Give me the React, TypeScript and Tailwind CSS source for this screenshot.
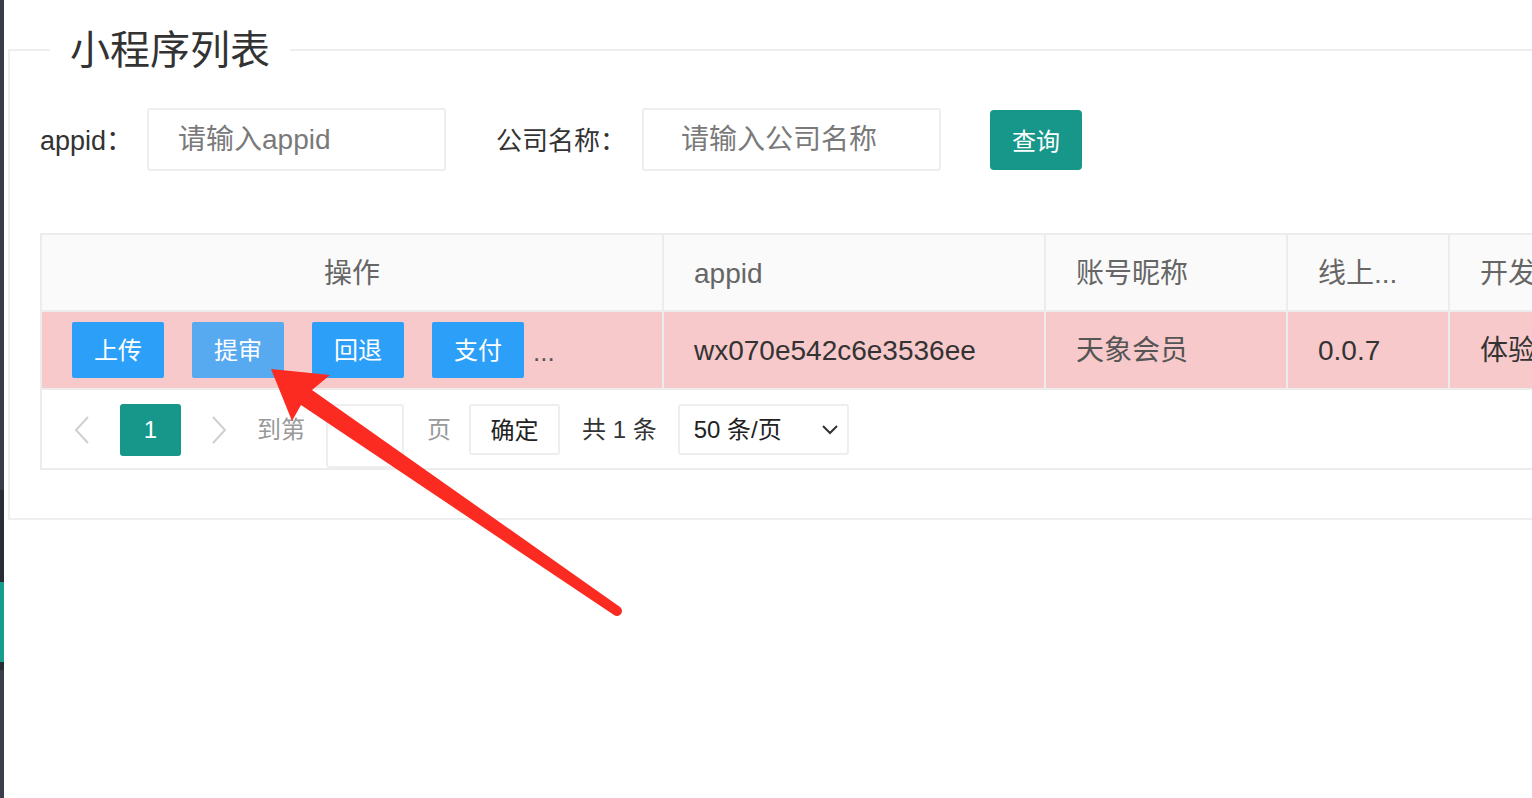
import React from "react";

const FONT = '"Liberation Sans", "Noto Sans CJK SC", sans-serif';

function Chevron({ dir }: { dir: "left" | "right" }) {
  return (
    <svg width="16" height="30" viewBox="0 0 16 30" aria-hidden>
      <polyline
        points={dir === "left" ? "14,2 2,15 14,28" : "2,2 14,15 2,28"}
        fill="none"
        stroke="#cfcfcf"
        strokeWidth="2"
      />
    </svg>
  );
}

function ActionButton({ label, hover }: { label: string; hover?: boolean }) {
  return (
    <button
      className={`flex h-[56px] w-[92px] items-center justify-center rounded-[2px] pt-[2px] text-[24px] text-white ${
        hover ? "bg-[#57a9f0]" : "bg-[#2c9ff8]"
      }`}
    >
      {label}
    </button>
  );
}

export default function App() {
  return (
    <div
      className="relative flex h-[798px] w-full overflow-hidden bg-white"
      style={{ fontFamily: FONT }}
    >
      {/* sidebar edge */}
      <div className="flex w-[4px] shrink-0 flex-col">
        <div className="h-[490px] bg-[#393c48]" />
        <div className="h-[92px] bg-[#2a2c33]" />
        <div className="h-[80px] bg-[#189c8c]" />
        <div className="h-[8px] bg-[#2a2c33]" />
        <div className="flex-1 bg-[#3a3d4a]" />
      </div>

      <div className="min-w-0 flex-1 pl-[4px] pt-[30px]">
        <fieldset className="w-[1600px] border-2 border-[#eeeeee] px-[30px] pb-[48px]">
          <legend className="ml-[10px] px-[20px] text-[40px] leading-[40px] text-[#333]">
            小程序列表
          </legend>

          {/* search form */}
          <div className="mt-[38px] flex h-[63px] items-center">
            <span className="w-[107px] pt-[4px] text-[27px] text-[#333]">appid：</span>
            <input
              className="h-[63px] w-[299px] rounded-[3px] border-2 border-[#eeeeee] pl-[29px] text-[28px] outline-none placeholder:text-[#7a7a7a]"
              placeholder="请输入appid"
            />
            <span className="ml-[50px] w-[146px] pt-[4px] text-[26px] text-[#333]">公司名称：</span>
            <input
              className="h-[63px] w-[299px] rounded-[3px] border-2 border-[#eeeeee] pl-[37px] text-[28px] outline-none placeholder:text-[#7a7a7a]"
              placeholder="请输入公司名称"
            />
            <button className="ml-[49px] h-[60px] w-[92px] rounded-[4px] bg-[#16978a] pt-[4px] text-[24px] text-white">
              查询
            </button>
          </div>

          {/* table */}
          <div className="mt-[62px] grid grid-cols-[622px_382px_242px_162px_300px] border-l-2 border-t-2 border-[#ececec]">
            <div className="flex h-[77px] items-center justify-center border-b-2 border-r-2 border-[#ececec] bg-[#fafafa] pt-[2px] text-[28px] text-[#666]">
              操作
            </div>
            <div className="flex h-[77px] items-center border-b-2 border-r-2 border-[#ececec] bg-[#fafafa] pl-[30px] pt-[2px] text-[28px] text-[#666]">
              appid
            </div>
            <div className="flex h-[77px] items-center border-b-2 border-r-2 border-[#ececec] bg-[#fafafa] pl-[30px] pt-[2px] text-[28px] text-[#666]">
              账号昵称
            </div>
            <div className="flex h-[77px] items-center border-b-2 border-r-2 border-[#ececec] bg-[#fafafa] pl-[30px] pt-[2px] text-[28px] text-[#666]">
              线上...
            </div>
            <div className="flex h-[77px] items-center border-b-2 border-r-2 border-[#ececec] bg-[#fafafa] pl-[30px] pt-[2px] text-[28px] text-[#666]">
              开发版本
            </div>

            <div className="flex h-[78px] items-center border-b-2 border-r-2 border-[#ececec] bg-[#f7c9cb] pl-[30px]">
              <div className="flex items-center gap-[28px]">
                <ActionButton label="上传" />
                <ActionButton label="提审" hover />
                <ActionButton label="回退" />
                <ActionButton label="支付" />
              </div>
              <span className="ml-[9px] pt-[4px] text-[26px] text-[#555]">...</span>
            </div>
            <div className="flex h-[78px] items-center border-b-2 border-r-2 border-[#ececec] bg-[#f7c9cb] pl-[30px] pt-[2px] text-[28px] text-[#333]">
              wx070e542c6e3536ee
            </div>
            <div className="flex h-[78px] items-center border-b-2 border-r-2 border-[#ececec] bg-[#f7c9cb] pl-[30px] pt-[2px] text-[28px] text-[#555]">
              天象会员
            </div>
            <div className="flex h-[78px] items-center border-b-2 border-r-2 border-[#ececec] bg-[#f7c9cb] pl-[30px] pt-[2px] text-[28px] text-[#333]">
              0.0.7
            </div>
            <div className="flex h-[78px] items-center border-b-2 border-r-2 border-[#ececec] bg-[#f7c9cb] pl-[30px] pt-[2px] text-[28px] text-[#333]">
              体验版
            </div>
          </div>

          {/* pagination */}
          <div className="flex h-[80px] items-start border-b-2 border-l-2 border-[#ececec] pt-[14px]">
            <div className="ml-[32px] flex h-[52px] items-center">
              <Chevron dir="left" />
            </div>
            <button className="ml-[30px] h-[52px] w-[61px] rounded-[3px] bg-[#16978a] text-[24px] text-white">
              1
            </button>
            <div className="ml-[30px] flex h-[52px] items-center">
              <Chevron dir="right" />
            </div>
            <span className="ml-[30px] flex h-[52px] items-center text-[24px] text-[#999]">到第</span>
            <input className="ml-[21px] h-[64px] w-[78px] rounded-[3px] border-2 border-[#eeeeee] outline-none" />
            <span className="ml-[23px] flex h-[52px] items-center text-[24px] text-[#999]">页</span>
            <button className="ml-[18px] h-[51px] w-[91px] rounded-[3px] border-2 border-[#eeeeee] pt-[2px] text-[24px] text-[#222]">
              确定
            </button>
            <span className="ml-[22px] flex h-[52px] items-center text-[24px] text-[#333]">共 1 条</span>
            <div className="ml-[21px] flex h-[51px] w-[171px] items-center justify-between rounded-[3px] border-2 border-[#eeeeee] pl-[14px] pr-[8px] text-[24px] text-[#222]">
              <span>50 条/页</span>
              <svg width="18" height="12" viewBox="0 0 18 12" aria-hidden>
                <polyline points="2,2 9,9 16,2" fill="none" stroke="#333" strokeWidth="2" />
              </svg>
            </div>
          </div>
        </fieldset>
      </div>

      {/* annotation arrow */}
      <svg
        className="pointer-events-none absolute left-0 top-0"
        width="1532"
        height="798"
        viewBox="0 0 1532 798"
        aria-hidden
      >
        <path
          d="M271 369 L330 375 L312 390 L620 607 A5 5 0 0 1 614 615 L301 405 L292 421 Z"
          fill="#fb2b21"
        />
      </svg>
    </div>
  );
}
